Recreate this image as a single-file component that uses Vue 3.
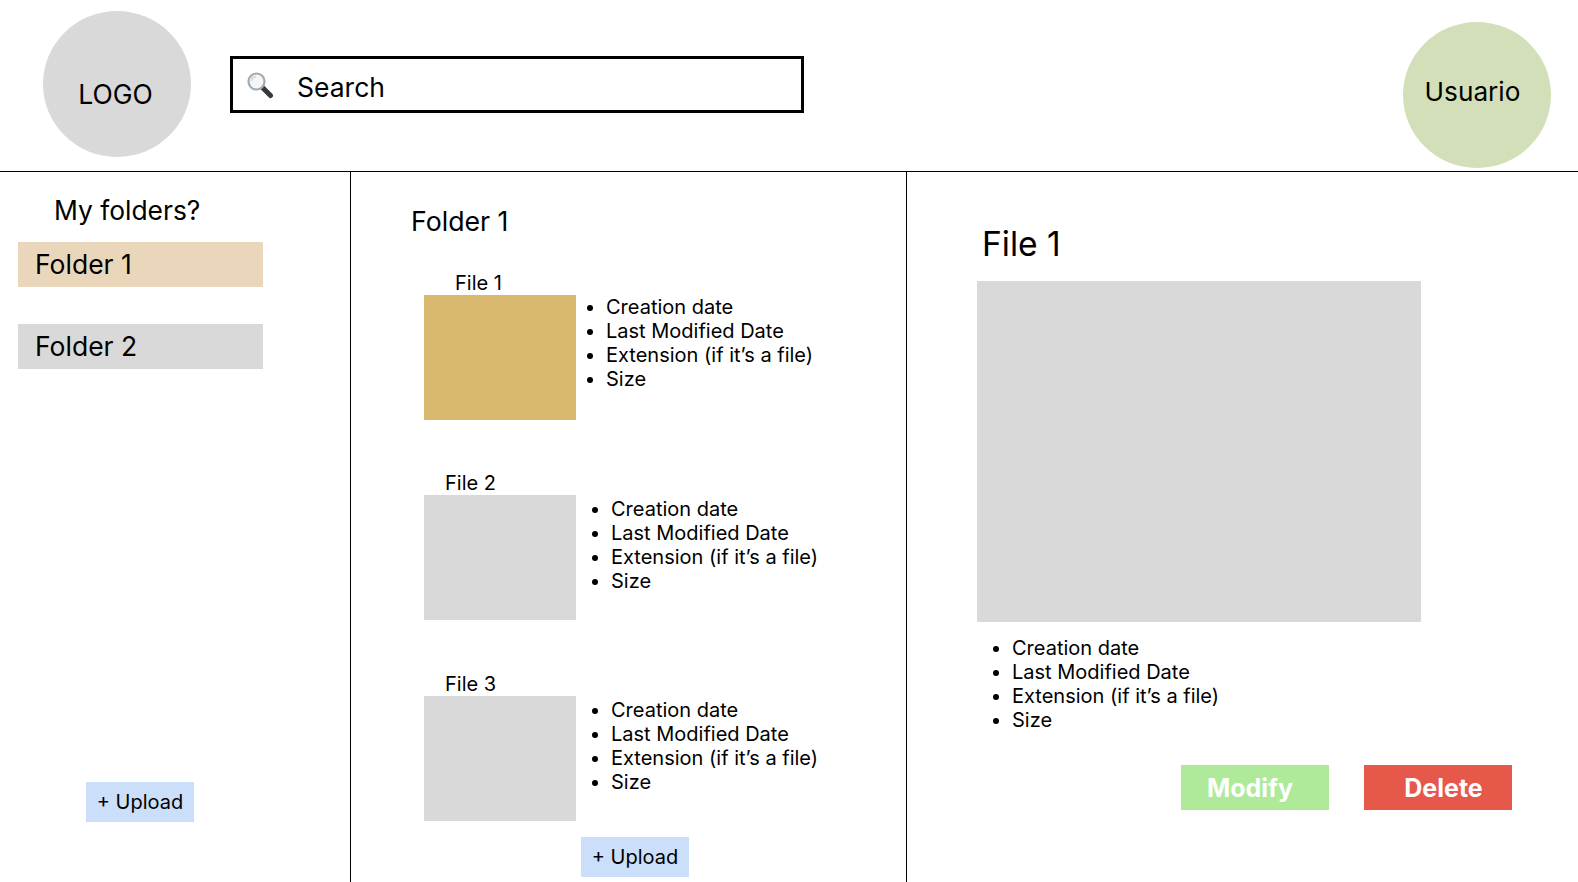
<script setup>
const folders = [
  { name: 'Folder 1', active: true },
  { name: 'Folder 2', active: false }
]

const files = [
  { name: 'File 1', selected: true },
  { name: 'File 2', selected: false },
  { name: 'File 3', selected: false }
]

const details = ['Creation date', 'Last Modified Date', 'Extension (if it’s a file)', 'Size']
</script>

<template>
  <div class="page">
    <header class="topbar">
      <div class="logo"><span>LOGO</span></div>
      <div class="search">
        <svg class="search-icon" viewBox="0 0 28 28" width="28" height="28">
          <path d="M17 17 L24.5 24.5" fill="none" stroke="#33393d" stroke-width="5" stroke-linecap="round" />
          <circle cx="10.5" cy="10.5" r="8" fill="#f4f7f9" stroke="#a3abb1" stroke-width="2.2" />
          <path d="M5.5 10 A5 5 0 0 1 10 5.5" fill="none" stroke="#d5dadd" stroke-width="2" />
        </svg>
        <span>Search</span>
      </div>
      <div class="user">Usuario</div>
    </header>

    <main class="columns">
      <aside class="sidebar">
        <h2 class="sidebar-title">My folders?</h2>
        <div
          v-for="folder in folders"
          :key="folder.name"
          :class="['folder', { active: folder.active }]"
        >
          {{ folder.name }}
        </div>
        <button class="upload sidebar-upload">+ Upload</button>
      </aside>

      <section class="list">
        <h2 class="list-title">Folder 1</h2>
        <article v-for="file in files" :key="file.name" :class="['file', { selected: file.selected }]">
          <div class="file-name">{{ file.name }}</div>
          <div class="file-body">
            <div class="thumb"></div>
            <ul class="meta">
              <li v-for="item in details" :key="item">{{ item }}</li>
            </ul>
          </div>
        </article>
        <button class="upload list-upload">+ Upload</button>
      </section>

      <section class="preview">
        <h1 class="preview-title">File 1</h1>
        <div class="preview-image"></div>
        <ul class="meta preview-meta">
          <li v-for="item in details" :key="item">{{ item }}</li>
        </ul>
        <div class="actions">
          <button class="action modify">Modify</button>
          <button class="action delete">Delete</button>
        </div>
      </section>
    </main>
  </div>
</template>

<style>
html,
body {
  margin: 0;
  background: #fff;
  overflow: hidden;
}
</style>

<style scoped>
.page {
  width: 1578px;
  height: 882px;
  overflow: hidden;
  font-family: Inter, "Liberation Sans", sans-serif;
  color: #000;
}

/* Cabecera */
.topbar {
  height: 172px;
  box-sizing: border-box;
  border-bottom: 1px solid #000;
  display: flex;
  align-items: flex-start;
}

.logo {
  width: 148px;
  height: 146px;
  margin: 11px 0 0 43px;
  border-radius: 50%;
  background: #d9d9d9;
  font-size: 26.5px;
  display: flex;
  justify-content: center;
  padding: 67px 3px 0 0;
  box-sizing: border-box;
}

.search {
  width: 574px;
  height: 57px;
  margin: 56px 0 0 39px;
  box-sizing: border-box;
  border: 3px solid #000;
  display: flex;
  align-items: center;
  padding: 5px 0 0 13px;
  font-size: 26.5px;
}

.search-icon {
  margin: -5px 23px 0 0;
}

.user {
  width: 148px;
  height: 146px;
  margin: 22px 27px 0 auto;
  border-radius: 50%;
  background: #d2dfb8;
  font-size: 26.2px;
  display: flex;
  align-items: center;
  justify-content: center;
  padding: 0 9px 8px 0;
  box-sizing: border-box;
}

/* Columnas */
.columns {
  display: grid;
  grid-template-columns: 351px 556px 1fr;
  height: 710px;
}

.sidebar,
.list {
  border-right: 1px solid #000;
}

.sidebar {
  display: flex;
  flex-direction: column;
  align-items: flex-start;
  padding-left: 18px;
}

.sidebar-title,
.list-title,
.preview-title {
  margin: 0;
  font-weight: 400;
}

.sidebar-title {
  font-size: 26.4px;
  line-height: 33px;
  margin: 22px 0 15px 36px;
}

.folder {
  width: 245px;
  height: 45px;
  box-sizing: border-box;
  padding-left: 17px;
  font-size: 26.5px;
  line-height: 45px;
  background: #d9d9d9;
  margin-bottom: 37px;
}

.folder.active {
  background: #ead7bb;
}

.upload {
  width: 108px;
  height: 40px;
  border: 0;
  padding: 0;
  background: #cbdffa;
  font-family: inherit;
  font-size: 20px;
  color: #000;
}

.sidebar-upload {
  margin: 376px 0 0 68px;
}

/* Lista de archivos */
.list {
  padding-left: 60px;
  display: flex;
  flex-direction: column;
  align-items: flex-start;
}

.list-title {
  font-size: 26.7px;
  line-height: 33px;
  margin: 33px 0 33px;
}

.file {
  margin: 0 0 51px 13px;
}

.file + .file {
  margin-bottom: 52px;
}

.file-name {
  font-size: 20px;
  line-height: 24px;
  padding-left: 21px;
}

.file.selected .file-name {
  padding-left: 31px;
}

.file-body {
  display: flex;
}

.thumb {
  width: 152px;
  height: 125px;
  background: #d9d9d9;
}

.file.selected .thumb {
  background: #d9b870;
}

.meta {
  margin: 0;
  padding-left: 35px;
  font-size: 20px;
  line-height: 24px;
}

.file .meta {
  padding-top: 2px;
}

.file.selected .meta {
  padding-left: 30px;
  padding-top: 0;
}

.list-upload {
  margin: -36px 0 0 170px;
}

/* Vista previa */
.preview {
  padding-left: 70px;
}

.preview-title {
  font-size: 33.6px;
  line-height: 41px;
  margin: 51px 0 17px 5px;
}

.preview-image {
  width: 444px;
  height: 341px;
  background: #d9d9d9;
}

.preview-meta {
  margin-top: 14px;
}

.actions {
  display: flex;
  gap: 35px;
  margin: 33px 0 0 204px;
}

.action {
  width: 148px;
  height: 45px;
  border: 0;
  padding: 0;
  font-family: inherit;
  font-size: 25px;
  font-weight: 700;
  color: #fff;
}

.modify {
  background: #aeea99;
  padding-right: 10px;
}

.delete {
  background: #e5584a;
  padding-left: 11px;
}
</style>
